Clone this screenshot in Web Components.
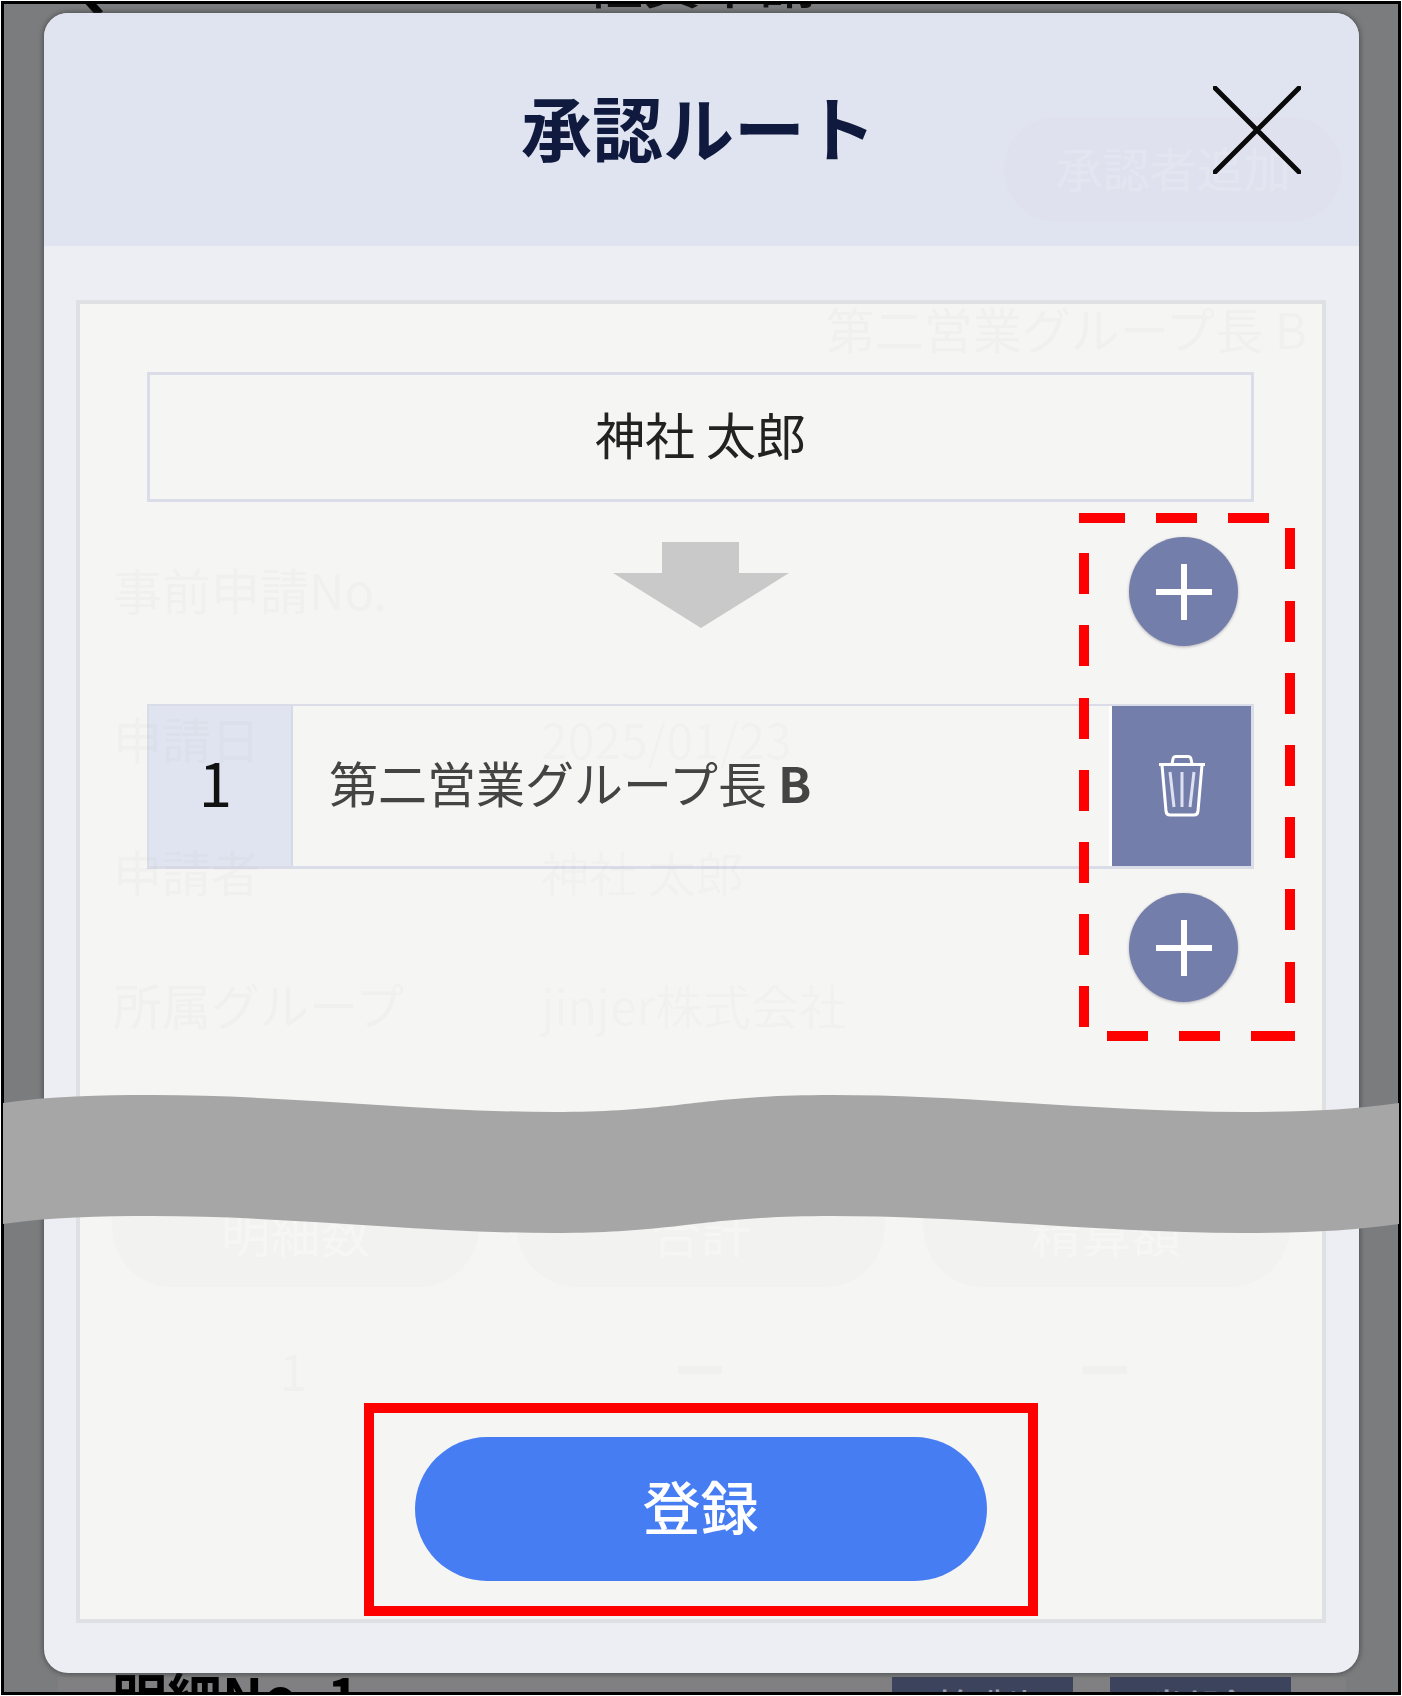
<!DOCTYPE html>
<html lang="ja">
<head>
<meta charset="utf-8">
<title>承認ルート</title>
<style>
  html, body { margin: 0; padding: 0; background: #fff; }
  body { font-family: "Noto Sans CJK JP", "Noto Sans", sans-serif; }
</style>
</head>
<body>
<shot-frame>
  <behind-page></behind-page>
  <route-modal heading="承認ルート" ghost="承認者追加">
    <person-box>神社 太郎</person-box>
    <step-connector></step-connector>
    <approver-row number="1">第二営業グループ長 <b style="font-weight:700">B</b></approver-row>
    <add-button style="align-self:flex-end;margin:24px 16px 0 0"></add-button>
    <submit-button>登録</submit-button>
  </route-modal>
  <ghost-layer></ghost-layer>
  <note-marks></note-marks>
</shot-frame>

<script>
class ShotFrame extends HTMLElement {
  constructor(){
    super();
    this.attachShadow({mode: 'open'});
    this.shadowRoot.innerHTML = `
      <style>
        :host{
          display: block;
          position: relative;
          box-sizing: border-box;
          width: 1402px;
          height: 1696px;
          padding: 13px 0 0 44px;
          overflow: hidden;
          background: #7b7c7e;
          box-shadow: inset 0 0 0 1px #fff, inset 0 0 0 4px #000;
        }
      </style>
      <slot></slot>
    `;
  }
}

// lo que queda detras del modal, solo se ve cortado arriba y abajo
class BehindPage extends HTMLElement {
  constructor(){
    super();
    this.attachShadow({mode: 'open'});
    this.shadowRoot.innerHTML = `
      <style>
        :host{ position: absolute; inset: 4px; overflow: hidden; font-family: "Noto Sans CJK JP", sans-serif; }
        .chev{ position: absolute; left: 74px; top: -14px; }
        .top{ position: absolute; left: 0; right: 0; top: -61px; text-align: center; font-size: 58px; line-height: 70px; color: #111; font-weight: 500; }
        .bottom{
          position: absolute; left: 54px; right: 52px; top: 1673px; bottom: 0;
          background: #808082; padding-left: 54px;
          display: flex; align-items: flex-start;
        }
        .num{ font-size: 55px; line-height: 50px; font-weight: 700; color: #000; white-space: pre; margin-top: -7px; }
        .btn{
          width: 181px; height: 30px; background: #3c435c; color: #9a9dab; font-size: 48px; line-height: 64px;
          text-align: center; overflow: hidden; flex: none;
        }
        .btn.a{ margin-left: auto; }
        .btn.b{ margin: 0 0 0 37px; }
        .gap{ width: 55px; flex: none; }
      </style>
      <svg class="chev" width="30" height="26" viewBox="0 0 30 26"><path d="M4 4 L22 24" stroke="#000" stroke-width="8" fill="none"/></svg>
      <div class="top">経費申請</div>
      <div class="bottom">
        <div class="num">明細No. 1</div>
        <div class="btn a">複製</div>
        <div class="btn b">削除</div>
        <div class="gap"></div>
      </div>
    `;
  }
}

class RouteModal extends HTMLElement {
  constructor(){
    super();
    this.attachShadow({mode: 'open'});
  }
  connectedCallback(){
    this.shadowRoot.innerHTML = `
      <style>
        :host{
          display: flex;
          flex-direction: column;
          position: relative;
          box-sizing: border-box;
          width: 1315px;
          height: 1660px;
          background: #edeef3;
          border-radius: 24px;
          overflow: hidden;
          box-shadow: 0 0 5px 1px rgba(60,60,60,.7);
        }
        header{
          height: 233px;
          flex: none;
          position: relative;
          background: #e0e4f0;
          display: grid;
          grid-template-columns: 1fr auto 1fr;
          align-items: center;
        }
        h1{
          grid-column: 2;
          margin: 0 6px 0 0;
          font: 700 71px/1 "Noto Sans CJK JP", sans-serif;
          color: #101a3e;
          position: relative;
          top: -4px;
        }
        .close{ grid-column: 3; justify-self: end; margin: 0 58px 0 0; display: block; position: relative; }
        /* boton de la pagina de abajo que se transparenta */
        .ghost-pill{
          position: absolute; left: 960px; top: 104px; width: 338px; height: 105px;
          display: flex; align-items: center; justify-content: center;
          border-radius: 52px; background: #dfe2ee; color: #e3e6f1;
          font: 400 47px/1 "Noto Sans CJK JP", sans-serif;
          padding-bottom: 6px; box-sizing: border-box;
        }
        main{ flex: 1; padding: 54px 33px 50px 32px; display: flex; min-height: 0; }
        .panel{
          flex: 1;
          box-sizing: border-box;
          display: flex;
          flex-direction: column;
          padding: 68px 68px 38px 67px;
          background: #f5f5f3;
          border: 4px solid #dfe0e4;
        }
      </style>
      <header>
        <div class="ghost-pill">${this.getAttribute('ghost')}</div>
        <h1>${this.getAttribute('heading')}</h1>
        <svg class="close" width="88" height="88" viewBox="0 0 88 88">
          <path d="M2 2 L86 86 M86 2 L2 86" stroke="#0a0a0a" stroke-width="5" fill="none" stroke-linecap="round"/>
        </svg>
      </header>
      <main><div class="panel"><slot></slot></div></main>
    `;
  }
}

class PersonBox extends HTMLElement {
  constructor(){
    super();
    this.attachShadow({mode: 'open'});
    this.shadowRoot.innerHTML = `
      <style>
        :host{
          display: flex;
          align-items: center;
          justify-content: center;
          box-sizing: border-box;
          height: 130px;
          flex: none;
          padding-bottom: 8px;
          border: 3px solid #dadce8;
          font: 400 50px/1 "Noto Sans CJK JP", sans-serif;
          color: #222;
        }
      </style>
      <slot></slot>
    `;
  }
}

class AddButton extends HTMLElement {
  constructor(){
    super();
    this.attachShadow({mode: 'open'});
    this.shadowRoot.innerHTML = `
      <style>
        :host{
          display: flex;
          align-items: center;
          justify-content: center;
          width: 109px;
          height: 109px;
          flex: none;
          border-radius: 50%;
          background: #747eaa;
          box-shadow: 0 1px 3px rgba(90,90,110,.45);
        }
      </style>
      <svg width="58" height="58" viewBox="0 0 58 58"><path d="M29 1 V57 M1 29 H57" stroke="#fff" stroke-width="6" fill="none"/></svg>
    `;
  }
}

class StepConnector extends HTMLElement {
  constructor(){
    super();
    this.attachShadow({mode: 'open'});
    this.shadowRoot.innerHTML = `
      <style>
        :host{
          display: grid;
          grid-template-columns: 1fr auto 1fr;
          align-items: start;
          height: 202px;
          flex: none;
        }
        svg{ grid-column: 2; margin-top: 40px; display: block; }
        add-button{ grid-column: 3; justify-self: end; margin: 35px 16px 0 0; }
      </style>
      <svg width="176" height="86" viewBox="0 0 176 86"><path d="M49 0 H126 V31 H176 L88 86 L0 31 H49 Z" fill="#c9c9c9"/></svg>
      <add-button></add-button>
    `;
  }
}

class ApproverRow extends HTMLElement {
  constructor(){
    super();
    this.attachShadow({mode: 'open'});
  }
  connectedCallback(){
    this.shadowRoot.innerHTML = `
      <style>
        :host{
          display: flex;
          box-sizing: border-box;
          height: 165px;
          flex: none;
          border: 3px solid #dadce8;
          border-width: 2px 3px 3px 2px;
        }
        .num{
          width: 144px;
          flex: none;
          box-sizing: border-box;
          padding: 0 9px 10px 0;
          background: #e0e4f0;
          display: flex;
          align-items: center;
          justify-content: center;
          font: 400 60px/1 "Noto Sans CJK JP", sans-serif;
          color: #111;
          border-right: 2px solid #d6d9e6;
        }
        .name{
          flex: 1;
          display: flex;
          align-items: center;
          padding: 0 0 10px 36px;
          font: 400 49px/1 "Noto Sans CJK JP", sans-serif;
          color: #444;
          white-space: pre;
        }
        .trash{
          width: 139px;
          flex: none;
          background: #747eaa;
          display: flex;
          align-items: center;
          justify-content: center;
          box-shadow: -3px 0 0 #fff;
        }
      </style>
      <div class="num">${this.getAttribute('number')}</div>
      <div class="name"><slot></slot></div>
      <div class="trash">
        <svg width="48" height="62" viewBox="0 0 48 62" fill="none">
          <path d="M1 9.5 H47 M14 9 L15 4 Q15.5 1.5 18 1.5 H30 Q32.5 1.5 33 4 L34 9" stroke="#fff" stroke-width="3"/>
          <path d="M4 10 L8 56 Q8.4 60 12 60 H36 Q39.6 60 40 56 L44 10" stroke="#fff" stroke-width="3"/>
          <path d="M12 17 L16 52 M24 17 V52 M36 17 L32 52" stroke="#dde1f2" stroke-width="3"/>
        </svg>
      </div>
    `;
  }
}

class SubmitButton extends HTMLElement {
  constructor(){
    super();
    this.attachShadow({mode: 'open'});
    this.shadowRoot.innerHTML = `
      <style>
        :host{
          display: flex;
          align-items: center;
          justify-content: center;
          align-self: center;
          box-sizing: border-box;
          width: 572px;
          height: 144px;
          flex: none;
          margin-top: auto;
          padding-bottom: 8px;
          border-radius: 72px;
          background: #477df2;
          color: #fff;
          font: 500 58px/1 "Noto Sans CJK JP", sans-serif;
        }
      </style>
      <slot></slot>
    `;
  }
}

// lo que se transparenta a traves del modal, casi no se nota
class GhostLayer extends HTMLElement {
  constructor(){
    super();
    this.attachShadow({mode: 'open'});
    this.shadowRoot.innerHTML = `
      <style>
        :host{
          position: absolute;
          inset: 0;
          pointer-events: none;
          font: 400 49px/60px "Noto Sans CJK JP", sans-serif;
          color: rgba(120,120,140,.04);
        }
        .route{ position: absolute; right: 95px; top: 298px; white-space: pre; }
        .form{
          position: absolute; left: 113px; top: 559px;
          display: grid; grid-template-columns: 428px auto; justify-content: start; row-gap: 73px;
          white-space: pre;
        }
        .form .first{ margin-bottom: 16px; }
        .form .val{ font-size: 48px; }
        .pills{
          position: absolute; left: 112px; top: 1120px; width: 1178px; height: 167px;
          display: flex; gap: 38px;
        }
        .pills div{
          flex: 1; display: flex; align-items: center; justify-content: center;
          border-radius: 60px; background: rgba(120,120,140,.02); color: rgba(255,255,255,.3); font-size: 50px;
          padding-top: 54px; box-sizing: border-box;
        }
        .vals{
          position: absolute; left: 112px; top: 1340px;
          display: grid; grid-template-columns: 362px 452px 358px; justify-items: center; align-items: center;
          height: 56px;
        }
        .vals i{ width: 44px; height: 8px; background: rgba(120,120,140,.04); }
      </style>
      <div class="route">第二営業グループ長 B</div>
      <div class="form">
        <span class="first">事前申請No.</span><span class="first"></span>
        <span>申請日</span><span class="val">2025/01/23</span>
        <span>申請者</span><span class="val">神社 太郎</span>
        <span>所属グループ</span><span class="val">jinjer株式会社</span>
      </div>
      <div class="pills"><div>明細数</div><div>合計</div><div>精算額</div></div>
      <div class="vals"><span>1</span><i></i><i></i></div>
    `;
  }
}

// anotaciones del manual: onda gris y marcos rojos
class NoteMarks extends HTMLElement {
  constructor(){
    super();
    this.attachShadow({mode: 'open'});
    const dashes = [
      [1079,513,46,10],[1156,513,41,10],[1228,513,41,10],
      [1107,1031,41,10],[1179,1031,41,10],[1251,1031,44,10]
    ];
    [553,625,698,770,842,914,986].forEach(y => dashes.push([1079,y,10,41]));
    [528,601,673,745,817,889,962].forEach(y => dashes.push([1285,y,10,41]));
    const rects = dashes.map(d => `<rect x="${d[0]}" y="${d[1]}" width="${d[2]}" height="${d[3]}"/>`).join('');
    this.shadowRoot.innerHTML = `
      <style>
        :host{ position: absolute; inset: 0; pointer-events: none; }
        svg{ display: block; }
      </style>
      <svg width="1402" height="1696" viewBox="0 0 1402 1696">
        <path fill="#a6a6a6" d="M3 1103 C50 1096 100 1095 152 1095 C290 1095 420 1112 555 1112 C680 1112 700 1095 832 1095 C970 1095 1100 1112 1243 1112 C1300 1112 1350 1110 1399 1103
          V1224 C1350 1231 1300 1233 1243 1233 C1100 1233 970 1216 832 1216 C700 1216 680 1233 555 1233 C420 1233 290 1216 152 1216 C100 1216 50 1217 3 1224 Z"/>
        <g fill="#ff0000">${rects}</g>
        <rect x="369" y="1408" width="664" height="203" fill="none" stroke="#ff0000" stroke-width="10"/>
      </svg>
    `;
  }
}

customElements.define('add-button', AddButton);
customElements.define('person-box', PersonBox);
customElements.define('step-connector', StepConnector);
customElements.define('approver-row', ApproverRow);
customElements.define('submit-button', SubmitButton);
customElements.define('route-modal', RouteModal);
customElements.define('behind-page', BehindPage);
customElements.define('ghost-layer', GhostLayer);
customElements.define('note-marks', NoteMarks);
customElements.define('shot-frame', ShotFrame);
</script>
</body>
</html>
